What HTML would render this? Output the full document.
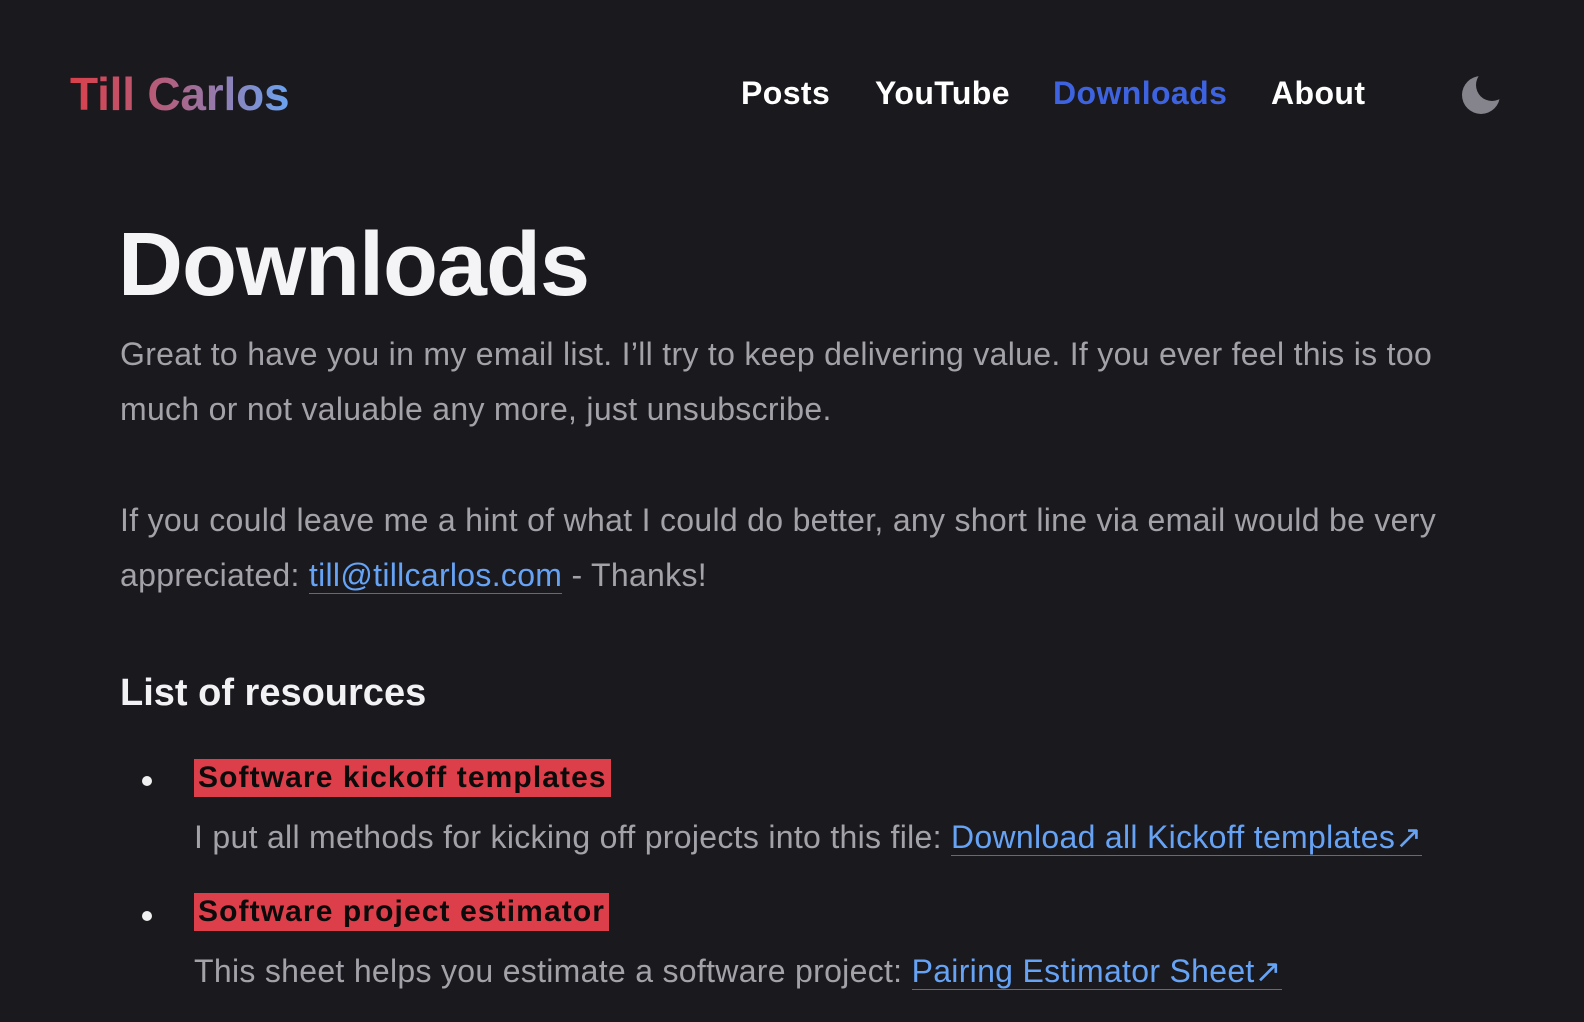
<!DOCTYPE html>
<html><head><meta charset="utf-8"><style>
body{margin:0;background:#1a191e;width:1584px;height:1022px;overflow:hidden;font-family:"Liberation Sans",sans-serif;color:#a3a2a8}
.logo{position:absolute;left:70px;top:67px;font-size:46px;font-weight:bold;background:linear-gradient(90deg,#d9404a 0%,#b06080 45%,#6aa3f0 100%);-webkit-background-clip:text;background-clip:text;color:transparent;letter-spacing:-0.2px}
.nav{position:absolute;top:75px;font-size:32px;font-weight:bold;color:#fff;letter-spacing:0.4px}
.moon{position:absolute;left:1460px;top:74px}
h1{position:absolute;left:118px;top:214px;margin:0;font-size:90px;font-weight:bold;color:#f4f4f6;letter-spacing:-1px}
.p{position:absolute;left:120px;font-size:32px;letter-spacing:0.3px;white-space:nowrap}
a{color:#66a3f5;text-decoration:none;border-bottom:1px solid #4a6fa8}
h2{position:absolute;left:120px;top:672px;margin:0;font-size:38px;font-weight:bold;color:#f2f2f4}
.dot{position:absolute;left:142px;width:10px;height:10px;border-radius:50%;background:#f0f0f0}
.hl{position:absolute;left:194px;background:#dc3e4a;color:#0b0b0b;font-size:30px;font-weight:bold;padding:0 4px;height:38px;line-height:38px;white-space:nowrap;letter-spacing:1.1px}
</style></head><body>
<div class="logo">Till Carlos</div>
<div class="nav" style="left:741px">Posts</div>
<div class="nav" style="left:875px">YouTube</div>
<div class="nav" style="left:1053px;color:#3e63e0">Downloads</div>
<div class="nav" style="left:1271px">About</div>
<svg class="moon" width="42" height="42" viewBox="0 0 42 42"><defs><mask id="m"><rect width="42" height="42" fill="#fff"/><circle cx="32" cy="11" r="16" fill="#000"/></mask></defs><circle cx="21" cy="21" r="19" fill="#85848c" mask="url(#m)"/></svg>
<h1>Downloads</h1>
<div class="p" style="top:336px">Great to have you in my email list. I’ll try to keep delivering value. If you ever feel this is too</div>
<div class="p" style="top:391px">much or not valuable any more, just unsubscribe.</div>
<div class="p" style="top:502px">If you could leave me a hint of what I could do better, any short line via email would be very</div>
<div class="p" style="top:557px">appreciated: <a>till@tillcarlos.com</a> - Thanks!</div>
<h2>List of resources</h2>
<div class="dot" style="top:776px"></div>
<div class="hl" style="top:759px">Software kickoff templates</div>
<div class="p" style="left:194px;top:818px">I put all methods for kicking off projects into this file: <a>Download all Kickoff templates↗</a></div>
<div class="dot" style="top:911px"></div>
<div class="hl" style="top:893px">Software project estimator</div>
<div class="p" style="left:194px;top:952px">This sheet helps you estimate a software project: <a>Pairing Estimator Sheet↗</a></div>
</body></html>
